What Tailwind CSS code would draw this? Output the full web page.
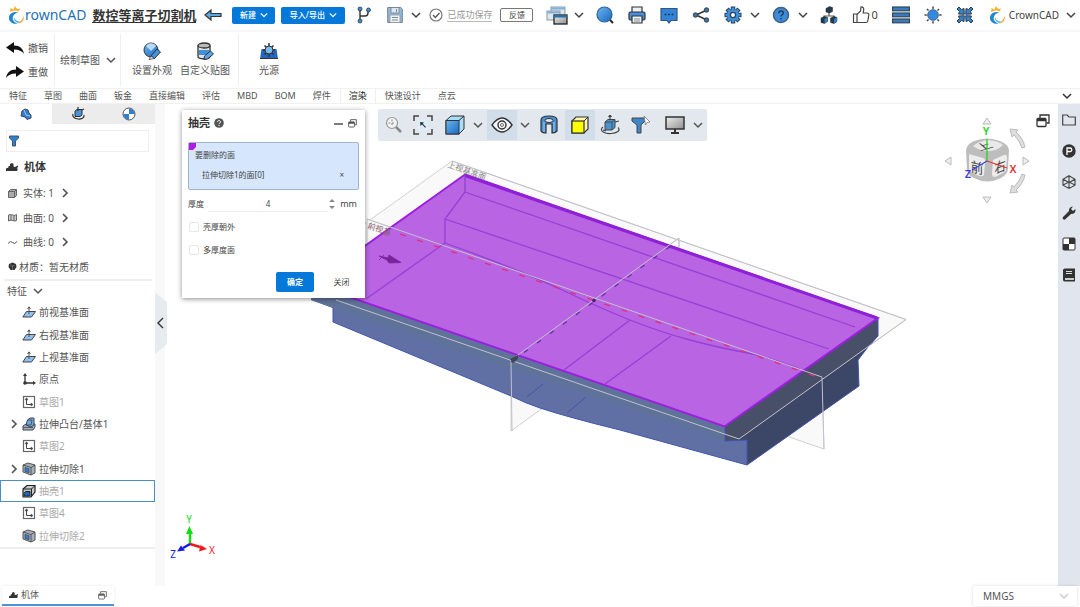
<!DOCTYPE html>
<html lang="zh-CN">
<head>
    <meta charset="UTF-8">
    <meta name="viewport" content="width=device-width, initial-scale=1.0">
    <title>CrownCAD</title>
    <script src="https://cdn.jsdelivr.net/npm/@tailwindcss/browser@4"></script>
</head>
<body class="flex h-screen flex-col overflow-hidden bg-white font-['Noto_Sans','Noto_Sans_CJK_SC',sans-serif] text-[10px] leading-4 text-[#555]">

    <!-- Shared icons -->
    <svg class="absolute size-0" aria-hidden="true">
        <symbol id="chev" viewBox="0 0 10 10"><path d="M1 3l4 4 4-4" fill="none" stroke="currentColor" stroke-width="1.5"/></symbol>
        <symbol id="chev-right" viewBox="0 0 10 10"><path d="M3 1l4 4-4 4" fill="none" stroke="currentColor" stroke-width="1.7"/></symbol>
        <symbol id="restore" viewBox="0 0 14 14">
            <path d="M4 4V1h9v8h-2.500" fill="none" stroke="currentColor" stroke-width="1.300"/>
            <rect x="1" y="4.500" width="9" height="8" rx="1" fill="#fff" stroke="currentColor" stroke-width="1.300"/>
            <path d="M1 6h9" stroke="currentColor" stroke-width="2.500"/>
        </symbol>
        <symbol id="crown" viewBox="0 0 18 20">
            <path d="M3 7L3.500 3l3 1.500L8 1l2.200 3 3-.500L11.500 6.500C9 5 6 5.500 3 7z" fill="#f5b335"/>
            <path d="M11.500 7.500C6 5.500 1.500 9 2 13.500c.500 4 4.500 6 8.500 5C6.500 17 5 14.500 6 11.500c.800-2.300 3-3.500 5.500-4z" fill="#1f86cf"/>
            <path d="M7 12c-.500 3 1 5 4 6l3-1.500C11 17 8 15.500 7 12z" fill="#4db3e6"/>
            <path d="M16.500 11c-.500 3-2.500 5.500-5.500 7.500 4-.500 6.500-3.500 5.500-7.500z" fill="#f29a1f"/>
        </symbol>
        <symbol id="part" viewBox="0 0 12 10"><path d="M0 9V6.500l2.500-1V4H4V2l2-1 1.500 1v2.500L9 5l3-1.500V5l-1.500 1.500H12L11 9z" fill="#333"/></symbol>
        <symbol id="plane" viewBox="0 0 14 12">
            <path d="M4.500 5.500h9l-4 5.500H.800z" fill="#8fc0ee" stroke="#444"/>
            <path d="M7 8V1M5.500 3L7 .800 8.500 3" fill="none" stroke="#555"/>
        </symbol>
        <symbol id="sketch" viewBox="0 0 14 14">
            <rect x="1.500" y="1.500" width="11" height="11" fill="#fff" stroke="#666" stroke-width="1.200"/>
            <path d="M4.500 4v5.500H9" fill="none" stroke="#444"/><path d="M4.500 2.800l1.500 2H3zM11 9.500L9 8v3z" fill="#444" stroke="#444" stroke-width=".5"/>
        </symbol>
        <symbol id="cut" viewBox="0 0 14 14">
            <path d="M1 3l5-2 7 2v8l-4 2-8-3z" fill="#a7afb8" stroke="#555"/>
            <path d="M1 3l8 2.500V13M9 5.500L13 3" fill="none" stroke="#555"/><path d="M3 5.500l4 1.200v4L3 9.500z" fill="#2f7fd0" stroke="#445" stroke-width=".7"/>
        </symbol>
        <symbol id="extrude" viewBox="0 0 14 14">
            <path d="M1 9l3-2h9v3l-2 3H1z" fill="#9db3c8" stroke="#444"/>
            <path d="M4 8l1.500-5L8 1h4v7l-3 2z" fill="#6aaae6" stroke="#444"/><path d="M4 8h5l1-5H5.500M1 10.500h10" fill="none" stroke="#444" stroke-width=".8"/>
        </symbol>
        <symbol id="shell" viewBox="0 0 14 14">
            <path d="M1 5l4-3.500h8V8l-4 5H1z" fill="#c3cad0" stroke="#222" stroke-width="1.200"/>
            <path d="M1 5h8.500L13 1.500M9.500 5v8" fill="none" stroke="#222"/><path d="M2 12V9.500L3.500 7.500H8V12z" fill="#1f66b8" stroke="#222"/>
        </symbol>
        <linearGradient id="blue" x1="0" y1="0" x2="1" y2="1"><stop offset="0" stop-color="#6db4f0"/><stop offset="1" stop-color="#1769c2"/></linearGradient>
        <linearGradient id="gray" x1="0" y1="0" x2="1" y2="1"><stop offset="0" stop-color="#eee"/><stop offset="1" stop-color="#8f8f8f"/></linearGradient>
    </svg>

    <!-- Top bar -->
    <header class="flex h-8 shrink-0 items-center border-b-2 border-[#f7f7f7] pr-1 pl-[7px] text-[#444]">
        <a href="#" class="flex items-center text-sm text-[#2573b5]" aria-label="CrownCAD">
            <svg class="h-5 w-[18px]" viewBox="0 0 18 20"><use href="#crown"/></svg>rownCAD
        </a>
        <h1 class="ml-1.5 border-b border-[#333] text-[13px] leading-[14px] font-bold text-[#333]">数控等离子切割机</h1>
        <button class="ml-2" aria-label="返回">
            <svg class="h-3 w-[18px]" viewBox="0 0 18 12"><path d="M1 6l6-5v3.500h10v3H7V11z" fill="#5ba7e6" stroke="#333" stroke-width="1.200"/></svg>
        </button>
        <button class="ml-2.5 flex h-[17px] w-[43px] items-center justify-center gap-1 rounded-xs bg-[#0479d9] text-[8px] font-medium text-white">新建<svg class="size-2"><use href="#chev"/></svg></button>
        <button class="ml-1.5 flex h-[17px] w-16 items-center justify-center gap-1 rounded-xs bg-[#0479d9] text-[8px] font-medium text-white">导入/导出<svg class="size-2"><use href="#chev"/></svg></button>
        <button class="ml-3" aria-label="分支">
            <svg class="h-[18px] w-3.5" viewBox="0 0 14 18"><path d="M3 3v12M3 10h5q3 0 3-3V4" fill="none" stroke="#333" stroke-width="1.400"/><g fill="#3b8ede" stroke="#333" stroke-width=".8"><circle cx="3" cy="3" r="2"/><circle cx="3" cy="15" r="2"/><circle cx="11.500" cy="4" r="2"/></g></svg>
        </button>
        <button class="ml-4" aria-label="保存">
            <svg class="h-[18px] w-4" viewBox="0 0 16 18"><path d="M.700 1.500h13L15.300 3v13.500H.700z" fill="#93b9da" stroke="#77818c"/><rect x="4" y="1.500" width="8" height="5.500" fill="#dbe6ee" stroke="#77818c" stroke-width=".8"/><rect x="3" y="9" width="10" height="7.500" fill="#eef2f3" stroke="#8b959e" stroke-width=".8"/><path d="M5 11.500h6M5 14h6M9.500 3v3" stroke="#7b8d9b"/></svg>
        </button>
        <button class="ml-2" aria-label="保存选项"><svg class="size-2.5"><use href="#chev"/></svg></button>
        <svg class="ml-2 size-3.5" viewBox="0 0 14 14"><circle cx="7" cy="7" r="6" fill="none" stroke="#777" stroke-width="1.200"/><path d="M4 7l2.300 2.500L10.500 5" fill="none" stroke="#555" stroke-width="1.300"/></svg>
        <span class="ml-1 border-b border-[#bbb] text-[9px] leading-3 text-[#999]">已成功保存</span>
        <button class="ml-2 h-3.5 w-[33px] rounded-xs border border-[#777] text-[8px] leading-3">反馈</button>

        <div class="ml-auto flex items-center">
            <button aria-label="窗口">
                <svg class="h-[19px] w-[22px]" viewBox="0 0 22 19"><g stroke="#8d99a4"><rect x="5" y="1" width="14" height="9" fill="#d9e6ef"/><rect x="1" y="5" width="13" height="9" fill="#dce9f1"/><path d="M5 2.500h14M1 6.500h13" stroke="#7fb1da" stroke-width="2"/></g><rect x="8" y="9" width="13" height="9" fill="url(#gray)" stroke="#222" stroke-width="1.300"/><path d="M8 10.500h13" stroke="#2573b5" stroke-width="2"/></svg>
            </button>
            <button class="ml-1.5" aria-label="窗口选项"><svg class="size-2.5"><use href="#chev"/></svg></button>
            <div class="ml-3 flex items-center gap-3.5">
                <button aria-label="搜索"><svg class="size-[18px]" viewBox="0 0 18 18"><path d="M13 13l4 4" stroke="#222" stroke-width="2"/><circle cx="8.500" cy="8.500" r="7.500" fill="url(#blue)" stroke="#356391" stroke-width="1.200"/></svg></button>
                <button aria-label="打印"><svg class="size-[18px]" viewBox="0 0 18 18"><path d="M4 6V1h10v5" fill="#eaf1f5" stroke="#333" stroke-width="1.200"/><rect x="1" y="6" width="16" height="8" rx="1.500" fill="#468fdb" stroke="#333" stroke-width="1.200"/><path d="M4 10h10v7H4z" fill="#eaf1f5" stroke="#333" stroke-width="1.200"/><path d="M6 13h6M6 15h6" stroke="#777" stroke-width=".8"/></svg></button>
                <button aria-label="消息"><svg class="size-[18px]" viewBox="0 0 18 18"><path d="M1 2.500h16v12h-6l-2 2.500-2-2.500H1z" fill="#3284d9" stroke="#345777" stroke-width="1.200"/><path d="M4.500 8.500h2M8 8.500h2M11.500 8.500h2" stroke="#183657" stroke-width="1.500"/></svg></button>
                <button aria-label="分享"><svg class="size-[18px]" viewBox="0 0 18 18"><path d="M15 4L4 9l11 5" fill="none" stroke="#333" stroke-width="1.500"/><g fill="#3b72a6" stroke="#333" stroke-width=".8"><circle cx="14.500" cy="4" r="2.300"/><circle cx="3.500" cy="9" r="2.300"/><circle cx="14.500" cy="14" r="2.300"/></g></svg></button>
                <button aria-label="设置"><svg class="size-[18px]" viewBox="0 0 18 18"><g stroke="#27425e" stroke-width="4.500"><path d="M9 .500v17M.500 9h17M3 3l12 12M15 3L3 15"/></g><g stroke="#418fd8" stroke-width="2.500"><path d="M9 1.500v15M1.500 9h15M3.700 3.700l10.600 10.600M14.300 3.700L3.700 14.300"/></g><circle cx="9" cy="9" r="5.800" fill="#418fd8"/><circle cx="9" cy="9" r="2.600" fill="#fff" stroke="#27425e" stroke-width="1.300"/></svg></button>
            </div>
            <button class="ml-2" aria-label="设置选项"><svg class="size-2.5"><use href="#chev"/></svg></button>
            <button class="ml-3" aria-label="帮助"><svg class="size-[18px]" viewBox="0 0 18 18"><circle cx="9" cy="9" r="7.500" fill="#3f8bd7" stroke="#3c5f82" stroke-width="1.500"/><path d="M6.800 7.200c0-3 4.500-3 4.500 0 0 1.600-2.200 1.600-2.200 3.300M9 12v1.500" fill="none" stroke="#143456" stroke-width="1.300"/></svg></button>
            <button class="ml-2" aria-label="帮助选项"><svg class="size-2.5"><use href="#chev"/></svg></button>
            <div class="ml-3 flex items-center gap-3.5">
                <button aria-label="结构"><svg class="size-[18px]" viewBox="0 0 18 18"><path d="M9 5v5M4 13v-3h10v3" fill="none" stroke="#555" stroke-width="1.200"/><g fill="#23394f" stroke="#222" stroke-width=".5"><path d="M6 2.500L9.500.500l3 1v4l-3 1.500L6 6zM1 12l3.500-1.500 3 1v4L4.500 17.500 1 16.500zM10.500 12l3.500-1.500 3 1v4l-3 2-3.500-1z"/></g><path d="M4.500 13l3-1.500v4l-3 2zM14 13l3-1.500v4l-3 2z" fill="#347fc7"/></svg></button>
                <button class="flex items-center gap-0.5 text-[11px]"><svg class="size-[18px]" viewBox="0 0 18 18"><path d="M1.500 8h3.500v8.500H1.500zM5 8.500L8.500 5l.500-4c2-.300 3 1 2.700 3l-.5 3H15c1.300 0 2 .800 1.800 2l-1 6c-.200 1-.700 1.500-1.700 1.500H5" fill="none" stroke="#444" stroke-width="1.200"/></svg>0</button>
                <button aria-label="列表"><svg class="size-[18px]" viewBox="0 0 18 18"><g fill="#3a7dbd" stroke="#30465b" stroke-width="1.200"><rect x=".6" y="1" width="16.800" height="3.800"/><rect x=".6" y="7" width="16.800" height="3.800"/><rect x=".6" y="13" width="16.800" height="3.800"/></g></svg></button>
                <button aria-label="亮度"><svg class="size-[18px]" viewBox="0 0 18 18"><path d="M9 .500v17M.500 9h17M3 3l12 12M15 3L3 15" stroke="#444" stroke-width="1.500" /><circle cx="9" cy="9" r="6.300" fill="#fff"/><circle cx="9" cy="9" r="5.300" fill="#348ae0" stroke="#45657f"/></svg></button>
                <button aria-label="全屏"><svg class="size-[18px]" viewBox="0 0 18 18"><g fill="#3a80c5" stroke="#2b3d50"><path d="M1 3l2-2 2.500 2.500L8 2.500 8.300 8.300 2.500 8l1-2.500zM17 3l-2-2-2.500 2.500-2.500-1-.300 5.800 5.800-.300-1-2.500zM1 15l2 2 2.500-2.500 2.500 1 .300-5.800-5.800.300 1 2.500zM17 15l-2 2-2.500-2.500-2.500 1-.300-5.800 5.800.300-1 2.500z"/></g></svg></button>
                <button class="flex items-center gap-[3px]"><svg class="h-5 w-[18px]" viewBox="0 0 18 20"><use href="#crown"/></svg>CrownCAD<svg class="ml-1 size-2.5"><use href="#chev"/></svg></button>
            </div>
        </div>
    </header>

    <!-- Ribbon -->
    <section class="flex h-14 shrink-0 items-stretch py-0.5">
        <div class="flex w-[55px] flex-col justify-between border-r border-[#eee] py-1.5 pl-1.5">
            <button class="flex items-center gap-1"><svg class="h-3 w-[18px] shrink-0" viewBox="0 0 18 12"><path d="M0 5.500L8 0v3.500c6 0 9 3 10 8.500-2-3-5-4.500-10-4.500V11z" fill="#111"/></svg>撤销</button>
            <button class="flex items-center gap-1"><svg class="h-3 w-[18px] shrink-0" viewBox="0 0 18 12"><path d="M18 5.500L10 0v3.500C4 3.500 1 6.500 0 12c2-3 5-4.500 10-4.500V11z" fill="#111"/></svg>重做</button>
        </div>
        <button class="flex w-[66px] items-center gap-1.5 border-r border-[#eee] pl-[5px]">绘制草图<svg class="size-2.5"><use href="#chev"/></svg></button>
        <div class="flex w-[118px] items-center gap-2 border-r border-[#eee] pl-[11px]">
            <button class="flex flex-col items-center gap-0.5">
                <svg class="size-[18px]" viewBox="0 0 18 18"><circle cx="8" cy="8" r="7" fill="url(#blue)" stroke="#333"/><path d="M3 4c3-4 8-3 10 0L8 9z" fill="#b9daf6"/><path d="M8 14l6-7 3.500 3-6 6.500z" fill="#4592dc" stroke="#333"/><path d="M6 17.500l2-3.500 3.500 2.500z" fill="#cbe3f7" stroke="#333" stroke-width=".7"/></svg>设置外观
            </button>
            <button class="flex flex-col items-center gap-0.5">
                <svg class="size-[18px]" viewBox="0 0 18 18"><path d="M2 3.500v11c0 3 12 3 12 0v-11" fill="#dfe5e9" stroke="#333" stroke-width="1.300"/><ellipse cx="8" cy="3.500" rx="6" ry="2.500" fill="#bbb" stroke="#333" stroke-width="1.300"/><path d="M3 8h10v5H3z" fill="#438fd6"/><path d="M8.500 14l6-5 3 3-6 5-3.500.500z" fill="#5ba4e5" stroke="#333"/></svg>自定义贴图
            </button>
        </div>
        <button class="ml-5 flex flex-col items-center justify-center gap-0.5">
            <svg class="size-[18px]" viewBox="0 0 18 18"><path d="M1.500 7h15l1.500 10H0z" fill="#2467bd"/><path d="M9 1v14M3 8h12M4.500 3.500l9 9M13.500 3.500l-9 9" stroke="#333" stroke-width="1.500"/><circle cx="9" cy="8" r="4" fill="#7bbcf2" stroke="#333"/><path d="M0 16.500h18" stroke="#333"/></svg>光源
        </button>
    </section>

    <!-- Ribbon tabs -->
    <nav class="flex h-4 shrink-0 items-center gap-[17px] border-y border-[#f1f1f1] pr-2 pl-[9px] text-[9px]">
        <a href="#">特征</a><a href="#">草图</a><a href="#">曲面</a><a href="#">钣金</a><a href="#">直接编辑</a><a href="#">评估</a><a href="#">MBD</a><a href="#">BOM</a><a href="#">焊件</a><a href="#" class="-mx-2 border-x border-[#eee] px-2 text-[#222]" aria-current="page">渲染</a><a href="#">快速设计</a><a href="#">点云</a>
        <button class="ml-auto text-[#333]" aria-label="收起功能区"><svg class="size-2.5"><use href="#chev"/></svg></button>
    </nav>

    <div class="flex min-h-0 flex-1">
        <!-- Feature tree -->
        <aside class="w-[155px] shrink-0">
            <div class="flex h-5">
                <button class="flex flex-1 items-center justify-center" aria-label="特征树"><svg class="size-3" viewBox="0 0 12 12"><path d="M2 3l3-2 3 1 1 3 2 2v3L7 11.500 5 9 1 8z" fill="#2f7ed0" stroke="#445"/><path d="M4 2l2 5 4 1" stroke="#9bc8f2" fill="none"/></svg></button>
                <button class="flex flex-1 items-center justify-center bg-[#ececec]" aria-label="视图"><svg class="size-3.5" viewBox="0 0 14 14"><path d="M4 4l2-1.500h5V8L9 9.500H4z" fill="#4893dc" stroke="#333"/><path d="M2 7c-2 6 12 7 11 1M7 0v4M11 3l2-1" fill="none" stroke="#333" stroke-width="1.200"/></svg></button>
                <button class="flex flex-1 items-center justify-center bg-[#ececec]" aria-label="外观"><svg class="size-3.5" viewBox="0 0 14 14"><circle cx="7" cy="7" r="6" fill="#fff" stroke="#555"/><path d="M7 7V1.500A5.500 5.500 0 0 1 12.500 7zM7 7v5.500A5.500 5.500 0 0 1 1.500 7z" fill="#2f7ed0"/></svg></button>
            </div>
            <label class="mx-1.5 mt-1.5 flex h-[22px] items-center gap-1 border border-[#eee] px-0.5">
                <svg class="h-3 w-2.5 shrink-0" viewBox="0 0 10 12"><path d="M.500 1h9v2L6.500 6v5h-3V6L.500 3z" fill="#2f7ed0" stroke="#456"/></svg>
                <input type="text" class="w-full min-w-0 outline-none" aria-label="筛选">
            </label>
            <h2 class="mt-[7px] flex items-center gap-1.5 pl-1.5 text-[11px] font-bold text-[#333]"><svg class="h-2.5 w-3"><use href="#part"/></svg>机体</h2>
            <ul class="mt-1.5 flex h-[98px] flex-col *:flex *:flex-1 *:items-center *:gap-1.5 *:pl-2">
                <li><svg class="size-[9px]" viewBox="0 0 9 9"><path d="M.500 2.500l2-2h6v6l-2 2h-6z" fill="#aaa" stroke="#666"/><path d="M.500 2.500h6v6M6.500 2.500l2-2" fill="none" stroke="#666"/></svg>实体: 1 <svg class="size-2.5"><use href="#chev-right"/></svg></li>
                <li><svg class="size-[9px]" viewBox="0 0 9 9"><path d="M.500 2q2-1 4 0t4-.500v6q-2 1-4 0t-4 .500z" fill="#ccc" stroke="#666"/><path d="M3 2v6M6 2v6" stroke="#666"/></svg>曲面: 0 <svg class="size-2.5"><use href="#chev-right"/></svg></li>
                <li><svg class="size-[9px]" viewBox="0 0 9 9"><path d="M0 5.500q2.500-3.500 4.500-1T9 3.500" fill="none" stroke="#555"/></svg>曲线: 0 <svg class="size-2.5"><use href="#chev-right"/></svg></li>
                <li><svg class="-mr-1 size-[9px]" viewBox="0 0 9 9"><path d="M4.500.500l3.500 1.500.500 3-2 3h-4l-2-3L1 2z" fill="#333"/><path d="M2 3l2.500 1L7 3M4.500 4v4" stroke="#888" stroke-width=".6" fill="none"/></svg>材质：暂无材质</li>
            </ul>
            <button class="mx-1 flex h-[22px] w-[148px] items-center gap-1.5 border-t-2 border-[#eee] pl-[3px]">特征<svg class="size-2.5"><use href="#chev"/></svg></button>
            <ul class="flex h-[248px] flex-col border-b-2 border-[#eee] *:flex *:flex-1 *:items-center *:gap-[3px] *:pl-[22px]">
                <li><svg class="h-3 w-3.5"><use href="#plane"/></svg>前视基准面</li>
                <li><svg class="h-3 w-3.5"><use href="#plane"/></svg>右视基准面</li>
                <li><svg class="h-3 w-3.5"><use href="#plane"/></svg>上视基准面</li>
                <li><svg class="h-3 w-3.5" viewBox="0 0 14 12"><path d="M3 2v8h8" fill="none" stroke="#333" stroke-width="1.300"/><path d="M3 0l2 3H1zM14 10l-3-2v4z" fill="#333"/><circle cx="3" cy="10" r="1.800" fill="#333"/></svg>原点</li>
                <li class="text-[#aaa]"><svg class="size-3.5"><use href="#sketch"/></svg>草图1</li>
                <li><svg class="-ml-[13px] size-2.5"><use href="#chev-right"/></svg><svg class="size-3.5"><use href="#extrude"/></svg>拉伸凸台/基体1</li>
                <li class="text-[#aaa]"><svg class="size-3.5"><use href="#sketch"/></svg>草图2</li>
                <li><svg class="-ml-[13px] size-2.5"><use href="#chev-right"/></svg><svg class="size-3.5"><use href="#cut"/></svg>拉伸切除1</li>
                <li class="text-[#aaa] ring-1 ring-[#4a8fc4] ring-inset"><svg class="size-3.5"><use href="#shell"/></svg>抽壳1</li>
                <li class="text-[#aaa]"><svg class="size-3.5"><use href="#sketch"/></svg>草图4</li>
                <li class="text-[#aaa]"><svg class="size-3.5"><use href="#cut"/></svg>拉伸切除2</li>
            </ul>
        </aside>
        <div class="flex w-2.5 shrink-0 flex-col bg-[#f8f8f8] pt-[188px]">
            <button class="relative z-10 h-[62px] w-3" aria-label="收起面板">
                <svg class="h-full w-full" viewBox="0 0 12 62"><path d="M0 0l12 10v42L0 62z" fill="#e6ebee"/><path d="M8 26l-5 5 5 5" fill="none" stroke="#333" stroke-width="1.400"/></svg>
            </button>
        </div>

        <!-- Model canvas -->
        <main class="relative min-w-0 flex-1">
            <svg class="absolute inset-0 h-full w-full" viewBox="165 104 893 482" preserveAspectRatio="xMinYMin meet">
                <!-- datum planes behind the body -->
                <g fill="#f9f9f9" stroke="#d0d0d0">
                    <path d="M452 161L906 319.500 739 439 285 281z"/>
                    <path d="M511 360v71l168-122v-71z"/>
                    <path d="M367 219v73l457 157-2-72z"/>
                </g>
                <!-- hull -->
                <path d="M311 284L725 426 747 440V465L620 430Q567 417 540 408 525 403 511 396L333 322V308L311 300z" fill="#6070a5"/>
                <path d="M311 284L725 426V441L333 308 311 300z" fill="#5f7299"/>
                <path d="M725 426L878 318V336L868 347 858 360 859 386 747 465V440L725 441z" fill="#3c4667"/>
                <path d="M725 426L878 318V336L868 347 739 439 725 441z" fill="#484f68"/>
                <path d="M333 322L511 396Q525 403 540 408 567 417 620 430L747 465 859 386 858 360 868 347 878 336V318M333 308V322M747 440V465M725 428V441L747 440" fill="none" stroke="#4055b0"/>
                <path d="M543 384L527 397M586 397L567 413" stroke="#4355a0"/>
                <path d="M465 174.500L878 318 724.500 426.500 311.500 284z" fill="#b864e3" stroke="#9c1ee0" stroke-width="2"/>
                <path d="M465 175.500L877 318" stroke="#8f20d8" stroke-width="3"/>
                <g fill="none" stroke="#9540d6" stroke-width="1.300">
                    <path d="M465 175V192L445 219V243L366 299M465 192L855 327M445 219L829 349"/>
                    <path d="M445 243Q520 270 560 289T630 320 690 340 743 352 800 369M630 320L564 370M671 336L605 384"/>
                </g>
                <path d="M452 161L906 319.500 739 439 336 300M367 219L822 377 824 449M679 248V238L511 360 512 431" fill="none" stroke="#c4c0ca"/>
                <path d="M400 234L815 376" stroke="#e0307c" stroke-width="1.300" stroke-dasharray="6 12"/>
                <path d="M511 362L679 240" stroke="#5b35a5" stroke-width="1.200" stroke-dasharray="5 11"/>
                <circle cx="594" cy="300.500" r="1.800" fill="#4d2068"/><path d="M510 359l8-4v4l-5 4z" fill="#3c4657"/>
                <path d="M379 260l5-5M379 256l9 2 1-3 12 7.500-12 .500-2-3z" fill="#7a249c" stroke="#7a249c" stroke-width=".8"/>
                <g fill="#888" font-size="8">
                    <text transform="translate(447 167) rotate(19)">上视基准面</text>
                    <text transform="translate(367 228) rotate(19)" fill="#8c6070">前视基</text>
                </g>

                <!-- axis triad -->
                <g stroke-width="2.500"><path d="M190 544V531" stroke="#12dc12"/><path d="M190 544l10 3" stroke="#f01818"/><path d="M190 544l-7 4" stroke="#1818e8"/></g>
                <path d="M189.500 526l3.500 8h-7z" fill="#12dc12"/><path d="M207 549l-8 2.500 1.500-6.500z" fill="#f01818"/><path d="M177 551.500l4-6 4 5z" fill="#1818e8"/>
                <g font-size="10" text-anchor="middle"><text x="189" y="523" fill="#12dc12">Y</text><text x="212" y="554" fill="#f01818">X</text><text x="173" y="558" fill="#1818e8">Z</text></g>

                <!-- view cube -->
                <g fill="#eee" stroke="#bbb">
                    <path d="M987 118l4 6h-8zM987 203l4-6h-8zM945 161l6-4v8zM1029 161l-6-4v8z"/>
                    <path d="M1010 129l8 1-2 2q7 6 9 15l-3 1q-2-7-8-13l-2 2zM1010 193l8-1-2-2q7-6 9-15l-3-1q-2 7-8 13l-2-2z" fill="#ddd"/>
                </g>
                <path d="M966 150q1-6 8-9 13-5 26 0 8 3 9 9l-1 19q-1 6-7 9-14 7-27 0-6-3-7-8z" fill="#bdbdbd"/>
                <path d="M973 146q6-5 15-6 11 1 15 5-6 6-15 6t-15-5z" fill="#e9e9e9"/>
                <path d="M969 154l14 4q3 1 2 5l-1 12q-1 2-5 1l-8-4q-2-1-2-5zM993 160l11-5q3-1 3 3l-1 11q0 3-3 4l-8 4q-3 0-3-3z" fill="#ededed"/>
                <g fill="#444" font-size="14" text-anchor="middle"><text transform="matrix(.9 .2 0 1 977 173)">前</text><text transform="matrix(.8 -.3 0 1 1000 172)">右</text><text transform="matrix(1 -.3 .6 .5 987 149)">上</text></g>
                <g stroke-width="1.300"><path d="M987 161V139" stroke="#22d522"/><path d="M987 161l20 7" stroke="#ee3030"/><path d="M987 161l-15 9" stroke="#4040e0"/></g>
                <g font-size="11" font-weight="600" text-anchor="middle"><text x="986" y="135" fill="#22d522">Y</text><text x="1013" y="173" fill="#ee3030">X</text><text x="968" y="178" fill="#4040e0">Z</text></g>
            </svg>

            <!-- View toolbar -->
            <div class="absolute top-[5px] left-[213px] flex h-8 items-center rounded-xs bg-[#e3e8ee] px-1 text-[#555] *:flex *:h-[30px] *:items-center *:justify-center">
                <button class="w-[23px]" aria-label="缩放"><svg class="size-[18px]" viewBox="0 0 18 18"><circle cx="7" cy="7" r="5.500" fill="#f2f4f5" stroke="#999" stroke-width="1.200"/><path d="M7 3.500v7M3.500 7h7" stroke="#888" stroke-dasharray="2 1.500"/><path d="M11 11l5 5" stroke="#888" stroke-width="2.500"/></svg></button>
                <button class="w-9" aria-label="适合窗口"><svg class="size-5" viewBox="0 0 20 20"><path d="M1 6V1h5M14 1h5v5M19 14v5h-5M6 19H1v-5" fill="none" stroke="#444" stroke-width="1.500"/><rect x="4.500" y="4.500" width="11" height="11" fill="#dceef8"/><path d="M7 7l4 .500-1.200 1.200L13 12l-.800.800L9 9.500 7.500 11z" fill="#333"/></svg></button>
                <button class="w-7" aria-label="着色"><svg class="size-5" viewBox="0 0 20 20"><path d="M1 5.500L6 1h13v13l-5 5H1z" fill="#a9dcf5" stroke="#333"/><rect x="1" y="5.500" width="13" height="13.500" fill="url(#blue)" stroke="#333"/><path d="M14 5.500L19 1" stroke="#333"/></svg></button>
                <button class="w-[18px]" aria-label="着色选项"><svg class="size-2.5"><use href="#chev"/></svg></button>
                <button class="w-[30px] bg-[#d1dee9]" aria-label="显示"><svg class="h-4 w-[22px]" viewBox="0 0 22 16"><path d="M1 8q10-14 20 0-10 14-20 0z" fill="#f4f7f9" stroke="#333" stroke-width="1.400"/><circle cx="11" cy="8" r="4" fill="none" stroke="#333" stroke-width="1.400"/><circle cx="11" cy="8" r="1.500" fill="#fff" stroke="#333" stroke-width=".7"/></svg></button>
                <button class="w-4" aria-label="显示选项"><svg class="size-2.5"><use href="#chev"/></svg></button>
                <button class="w-8" aria-label="剖视图"><svg class="size-5" viewBox="0 0 20 20"><path d="M2 5q0-4 8-4t8 4v11q-2 2-5 2V9H7v9q-4 0-5-2z" fill="#4690d6" stroke="#333" stroke-width="1.200"/><ellipse cx="10" cy="5.500" rx="4" ry="2" fill="#e3e8ee" stroke="#333"/><path d="M5 7v10M15 7v10" stroke="#9acbf0"/></svg></button>
                <button class="w-[30px] bg-[#d1dee9]" aria-label="边线着色"><svg class="size-[18px]" viewBox="0 0 18 18"><path d="M1 5l4-4h12v12l-4 4H1z" fill="#fff6ae" stroke="#333" stroke-width="1.200"/><rect x="1" y="5" width="12" height="12" fill="#ff0" stroke="#333" stroke-width="1.200"/><path d="M13 5l4-4" stroke="#333"/></svg></button>
                <button class="w-[30px]" aria-label="旋转"><svg class="size-5" viewBox="0 0 20 20"><path d="M5 7l3-2.500h7v8L12 15H5z" fill="#4a91cd" stroke="#444"/><path d="M5 7h7v8M12 7l3-2.500" fill="none" stroke="#444" stroke-width=".8"/><path d="M3 12c-5 4 3 7 8 6.500 6-.500 10-3 7-6M10 0v5M8.500 2L10 0l1.500 2M15 7l4-1M6 16l-3-1" fill="none" stroke="#444" stroke-width="1.200"/></svg></button>
                <button class="w-8" aria-label="选择过滤"><svg class="size-5" viewBox="0 0 20 20"><path d="M1 3h13v3l-4 4v8H6v-8L1 6z" fill="#3e86c9" stroke="#444"/><path d="M13 1l6 6-3 .500L14.500 10z" fill="#fff" stroke="#777" stroke-width=".8"/></svg></button>
                <button class="w-9" aria-label="屏幕"><svg class="size-5" viewBox="0 0 20 20"><rect x="1" y="2" width="18" height="12" fill="url(#gray)" stroke="#333" stroke-width="1.500"/><path d="M10 14v4M6 18h8" stroke="#333" stroke-width="2"/></svg></button>
                <button class="w-2.5" aria-label="屏幕选项"><svg class="size-2.5"><use href="#chev"/></svg></button>
            </div>
            <button class="absolute top-2.5 right-2 text-[#333]" aria-label="还原窗口"><svg class="size-3.5"><use href="#restore"/></svg></button>

            <!-- Shell dialog -->
            <form class="absolute top-1.5 left-[17px] w-[183px] bg-white px-1.5 pb-1.5 text-[8px] text-[#444] shadow-[0_1px_5px_rgba(0,0,0,0.45)]">
                <div class="flex h-[26px] items-center">
                    <h2 class="text-[11px] font-bold text-[#333]">抽壳</h2>
                    <svg class="ml-1 size-2.5" viewBox="0 0 10 10"><circle cx="5" cy="5" r="4.800" fill="#555"/><path d="M3.500 4c0-2 3-2 3 0 0 1-1.500 1-1.500 2M5 7v1" fill="none" stroke="#fff"/></svg>
                    <button type="button" class="ml-auto" aria-label="最小化"><svg class="size-2.5" viewBox="0 0 10 10"><path d="M0 6h9" stroke="#333" stroke-width="1.300"/></svg></button>
                    <button type="button" class="mr-0.5 ml-1" aria-label="还原"><svg class="size-[9px]"><use href="#restore"/></svg></button>
                </div>
                <div class="relative mt-1.5 h-12 rounded-xs border border-[#9fb5c8] bg-[#d6e7fd] pt-1 pl-1.5">
                    <svg class="absolute top-0 left-0 size-[7px]" viewBox="0 0 7 7"><path d="M0 0h7v4L4 7H0z" fill="#b01ae8"/></svg>
                    <p>要删除的面</p>
                    <p class="mt-1 flex items-center justify-between pr-3.5 pl-[7px]">拉伸切除1的面[0]<button type="button" aria-label="移除">×</button></p>
                </div>
                <div class="mt-1.5 flex items-center">
                    <label for="thickness">厚度</label>
                    <input id="thickness" type="text" value="4" class="ml-1 h-4 min-w-0 flex-1 border-b border-[#eee] text-center outline-none">
                    <svg class="h-3 w-2" viewBox="0 0 8 12"><path d="M1 4l3-3 3 3zM1 8l3 3 3-3z" fill="#888"/></svg>
                    <span class="mr-0.5 ml-1 text-[9px]">mm</span>
                </div>
                <label class="mt-[7px] flex items-center gap-1 pl-px"><input type="checkbox" class="size-[10px] appearance-none rounded-xs border border-[#e6e6e6]">壳厚朝外</label>
                <label class="mt-[7px] flex items-center gap-1 pl-px"><input type="checkbox" class="size-[10px] appearance-none rounded-xs border border-[#e6e6e6]">多厚度面</label>
                <div class="mt-3.5 flex justify-end">
                    <button type="button" class="h-5 w-[38px] rounded-xs bg-[#0479d9] font-bold text-white">确定</button>
                    <button type="button" class="ml-2.5 w-[35px]">关闭</button>
                </div>
            </form>
        </main>

        <!-- Right rail -->
        <nav class="flex w-[22px] shrink-0 flex-col items-center gap-[17px] bg-[#e1e5ed] pt-[9px]">
            <button aria-label="文件"><svg class="size-3.5" viewBox="0 0 14 14"><path d="M.700 12V2h4.500L7 4h6.300v8z" fill="none" stroke="#444" stroke-width="1.200"/></svg></button>
            <button aria-label="属性"><svg class="size-3.5" viewBox="0 0 14 14"><circle cx="7" cy="7" r="6.700" fill="#333"/><path d="M5 11V4h3q1.800 0 1.800 1.800T8 7.500H5" fill="none" stroke="#fff" stroke-width="1.300"/></svg></button>
            <button aria-label="装配"><svg class="size-3.5" viewBox="0 0 14 14"><path d="M7 .700l6 3.500v6l-6 3.200-6-3.200v-6zM1 4.200l6 3.300 6-3.300M1 10l6-3 6 3M7 1v12.500" fill="none" stroke="#444" stroke-width="1.100"/></svg></button>
            <button aria-label="工具"><svg class="size-3.5" viewBox="0 0 14 14"><path d="M1 11l6-6q-.500-4 4-4.500L9 3l2 2 2.500-2q.500 5-4.500 5l-6 5.500Q1.500 14 .500 12.500z" fill="#333"/></svg></button>
            <button aria-label="材质"><svg class="size-3.5" viewBox="0 0 14 14"><rect x="1" y="1" width="12" height="12" rx="1" fill="#fff" stroke="#333"/><path d="M7 1h6v6H1v6h6z" fill="#333"/></svg></button>
            <button aria-label="手册"><svg class="size-3.5" viewBox="0 0 14 14"><path d="M1 2q0-1.500 2-1.500h10v13H3Q1 13.500 1 12z" fill="#333"/><path d="M4 3.500h6M4 5.500h6" stroke="#ddd"/><path d="M3 11h9" stroke="#fff" stroke-width="1.500"/></svg></button>
        </nav>
    </div>

    <!-- Status bar -->
    <footer class="flex h-[21px] shrink-0 items-stretch justify-between pr-[3px] pb-px pl-0.5">
        <button class="flex w-28 items-center gap-[3px] border-b-2 border-[#4d94d6] px-[7px] text-[9px] shadow-[0_0_3px_rgba(0,0,0,0.1)]"><svg class="h-2 w-[9px]" viewBox="0 0 12 10"><use href="#part"/></svg>机体<svg class="ml-auto size-[9px]"><use href="#restore"/></svg></button>
        <label class="relative flex w-[104px] items-center shadow-[0_0_3px_rgba(0,0,0,0.15)]">
            <select class="w-full appearance-none bg-transparent pl-2.5 outline-none" aria-label="单位"><option>MMGS</option></select>
            <svg class="pointer-events-none absolute right-2 size-2.5 text-[#ccc]"><use href="#chev"/></svg>
        </label>
    </footer>
</body>
</html>
